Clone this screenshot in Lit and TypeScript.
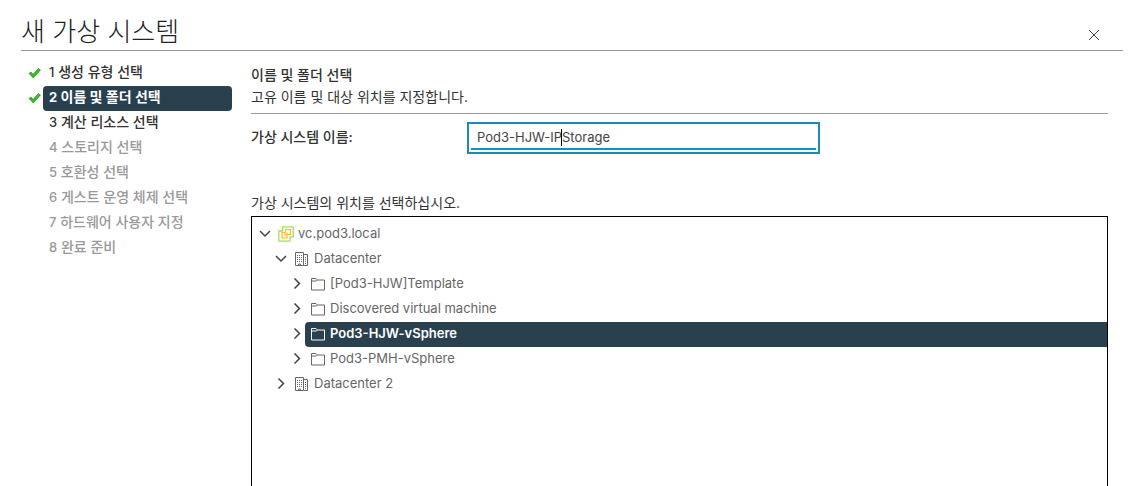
import { LitElement, html, css, svg, nothing } from "lit";
import { customElement, property, state } from "lit/decorators.js";
import { classMap } from "lit/directives/class-map.js";

type StepState = "done" | "current" | "next" | "pending";
interface Step { n: number; label: string; state: StepState; checked: boolean }
interface TreeItem {
  id: string;
  label: string;
  icon: "vcenter" | "datacenter" | "folder";
  open?: boolean;
  children?: TreeItem[];
}

const STEPS: Step[] = [
  { n: 1, label: "생성 유형 선택", state: "done", checked: true },
  { n: 2, label: "이름 및 폴더 선택", state: "current", checked: true },
  { n: 3, label: "계산 리소스 선택", state: "next", checked: false },
  { n: 4, label: "스토리지 선택", state: "pending", checked: false },
  { n: 5, label: "호환성 선택", state: "pending", checked: false },
  { n: 6, label: "게스트 운영 체제 선택", state: "pending", checked: false },
  { n: 7, label: "하드웨어 사용자 지정", state: "pending", checked: false },
  { n: 8, label: "완료 준비", state: "pending", checked: false },
];

const TREE: TreeItem[] = [
  {
    id: "vc", label: "vc.pod3.local", icon: "vcenter", open: true,
    children: [
      {
        id: "dc", label: "Datacenter", icon: "datacenter", open: true,
        children: [
          { id: "tpl", label: "[Pod3-HJW]Template", icon: "folder" },
          { id: "disc", label: "Discovered virtual machine", icon: "folder" },
          { id: "hjw", label: "Pod3-HJW-vSphere", icon: "folder" },
          { id: "pmh", label: "Pod3-PMH-vSphere", icon: "folder" },
        ],
      },
      { id: "dc2", label: "Datacenter 2", icon: "datacenter" },
    ],
  },
];

const icons = {
  vcenter: svg`
    <path d="M5.500 .8h9a.7.7 0 0 1 .7.7v9a.7.7 0 0 1-.7.7h-2.500v3.300a.7.7 0 0 1-.7.7h-9.800a.7.7 0 0 1-.7-.7v-9.500h3.800v-3.500a.7.7 0 0 1 .9-.7z" fill="#fff" stroke="#a6da68" stroke-width="1.300"/>
    <path d="M7.500 6.500v-3h5v5h-3.500M7 6.500h-3v5.500h5v-3M9 6.500v2.500h-2v-2.500" fill="none" stroke="#fbbd16" stroke-width="1.200"/>`,
  datacenter: svg`
    <path d="M1.500 14.500v-13h8v13zM9.500 3.500h4v11h-4" fill="none" stroke="currentColor" stroke-linejoin="round"/>
    <path d="M3.500 4v8M5.500 4v8M7.500 4v8" stroke="currentColor" stroke-dasharray="1 1"/>
    <path d="M11.500 6v1M11.500 8v1M11.500 10v1M11.500 12v1" stroke="currentColor"/>
    <path d="M4.500 14.500v-1.500h2v1.500" fill="none" stroke="currentColor"/>`,
  folder: svg`
    <path d="M1.500 14v-11.500h4.500l1.500 1.500h7v10zM1.500 5h5l1-1" fill="none" stroke="currentColor" stroke-linejoin="round"/>`,
};

@customElement("wizard-steps")
class WizardSteps extends LitElement {
  @property({ attribute: false }) steps: Step[] = [];
  static styles = css`
    ol { list-style: none; margin: 0; padding: 0; }
    li { display: grid; grid-template-columns: 15px 1fr; height: 25px; align-items: center; }
    .mark { display: block; grid-column: 1; width: 13px; height: 12px; padding-bottom: 2px; }
    button {
      grid-column: 2; height: 25px; border: 0; border-radius: 4px; background: none;
      padding: 0 6px 3px; font: inherit; font-weight: 500; color: #333; text-align: left;
      white-space: nowrap;
    }
    .num { font-size: 13px; }
    .current { background: #29404e; color: #fff; font-weight: 700; }
    .pending { color: #999; }
  `;
  render() {
    return html`<ol>
      ${this.steps.map((s) => html`<li>
        ${s.checked ? html`<svg class="mark" viewBox="0 0 13 12" aria-hidden="true">
          <path d="M1 6.500l2-1.500 2 2.300L10.500 1.500 12.500 3 5.300 11z" fill="#35bd22" stroke="#238a18" stroke-width=".6"/>
        </svg>` : nothing}
        <button class=${classMap({ [s.state]: true })} aria-current=${s.state === "current" ? "step" : nothing}
          aria-disabled=${s.state === "pending" ? "true" : nothing}><span class="num">${s.n}</span> ${s.label}</button>
      </li>`)}
    </ol>`;
  }
}

@customElement("inventory-tree")
class InventoryTree extends LitElement {
  @property({ attribute: false }) items: TreeItem[] = [];
  @state() private selected = "hjw";
  static styles = css`
    :host { display: block; font-size: 13px; color: #666; }
    ul { list-style: none; margin: 0; padding: 0 0 0 16px; }
    .root { padding: 5px 0 0 4px; }
    .row { display: flex; height: 25px; }
    button { border: 0; background: none; padding: 0 0 2px; font: inherit; color: inherit; }
    .toggle { width: 17px; display: flex; align-items: center; justify-content: center; }
    .node {
      flex: 1; display: flex; align-items: center; gap: 4px; padding-left: 5px;
      border-radius: 4px 0 0 4px; text-align: left;
    }
    .text { padding-bottom: 2px; }
    .selected { background: #29404e; color: #fff; font-weight: 600; }
    svg { display: block; }
    .toggle svg { color: #444; }
  `;
  private toggle(i: TreeItem) { i.open = !i.open; this.requestUpdate(); }
  private item(i: TreeItem): unknown {
    return html`<li role="treeitem" aria-expanded=${i.open ? "true" : "false"}>
      <div class="row">
        <button class="toggle" aria-label=${i.label} @click=${() => this.toggle(i)}>
          <svg width="12" height="12" viewBox="0 0 12 12" fill="none" stroke="currentColor" stroke-width="1.500">
            <path d=${i.open ? "M1 3l5 5 5-5" : "M3.500 .5l5 5-5 5"}/>
          </svg>
        </button>
        <button class=${classMap({ node: true, selected: i.id === this.selected })}
          @click=${() => { this.selected = i.id; }}>
          <svg width="16" height="16" viewBox="0 0 16 16">${icons[i.icon]}</svg>
          <span class="text">${i.label}</span>
        </button>
      </div>
      ${i.open && i.children ? html`<ul role="group">${i.children.map((c) => this.item(c))}</ul>` : nothing}
    </li>`;
  }
  render() {
    return html`<ul class="root" role="tree">${this.items.map((i) => this.item(i))}</ul>`;
  }
}

@customElement("app-root")
class AppRoot extends LitElement {
  @state() private name = "Pod3-HJW-IPStorage";
  static styles = css`
    :host {
      display: flex; flex-direction: column; height: 100vh; overflow: hidden; box-sizing: border-box;
      padding: 0 9px 0 21px; background: #fff; color: #333;
      font: 14px/20px Inter, "Noto Sans CJK KR", sans-serif;
    }
    header {
      display: flex; justify-content: space-between; align-items: center; height: 50px;
      border-bottom: 1px solid #999; flex: none;
    }
    h1 { margin: 0; padding-top: 14px; font-size: 26px; line-height: 36px; font-weight: 300; color: #222; }
    .close { border: 0; background: none; padding: 20px 23px 0 0; color: #444; }
    .close svg { display: block; }
    .body { flex: 1; display: grid; grid-template-columns: 211px 1fr; gap: 19px; min-height: 0; }
    wizard-steps { padding: 10px 0 0 7px; }
    main { display: flex; flex-direction: column; padding: 13px 15px 0 0; }
    h2 { margin: 0; font-size: 14px; line-height: 22px; font-weight: 500; }
    .intro { margin: 0; line-height: 22px; padding-bottom: 5px; border-bottom: 1px solid #999; }
    .field { display: grid; grid-template-columns: 216px 353px; align-items: center; padding-top: 8px; }
    .field label { font-weight: 500; padding-bottom: 2px; }
    .box { position: relative; border: 2px solid #1a8abb; padding: 2px; height: 24px; }
    input {
      box-sizing: border-box; width: 100%; height: 24px; border: 0; border-bottom: 2px solid #0095d3;
      padding: 0 6px; outline: 0; background: none; color: #444; font: inherit; font-size: 13px;
    }
    .caret { position: absolute; left: 92px; top: 5px; width: 1px; height: 17px; background: #000; }
    .where { margin: 0; padding: 39px 0 3px; }
    inventory-tree { flex: 1; border: 1px solid #000; border-bottom: 0; }
  `;
  render() {
    return html`
      <header>
        <h1>새 가상 시스템</h1>
        <button class="close" aria-label="닫기">
          <svg width="12" height="12" viewBox="0 0 12 12" stroke="currentColor"><path d="M1 1l10 10M11 1L1 11"/></svg>
        </button>
      </header>
      <div class="body">
        <wizard-steps .steps=${STEPS}></wizard-steps>
        <main>
          <h2>이름 및 폴더 선택</h2>
          <p class="intro">고유 이름 및 대상 위치를 지정합니다.</p>
          <div class="field">
            <label for="vm-name">가상 시스템 이름:</label>
            <div class="box">
              <input id="vm-name" type="text" spellcheck="false" .value=${this.name}
                @input=${(e: Event) => { this.name = (e.target as HTMLInputElement).value; }}>
              <span class="caret"></span>
            </div>
          </div>
          <p class="where">가상 시스템의 위치를 선택하십시오.</p>
          <inventory-tree .items=${TREE}></inventory-tree>
        </main>
      </div>`;
  }
}
